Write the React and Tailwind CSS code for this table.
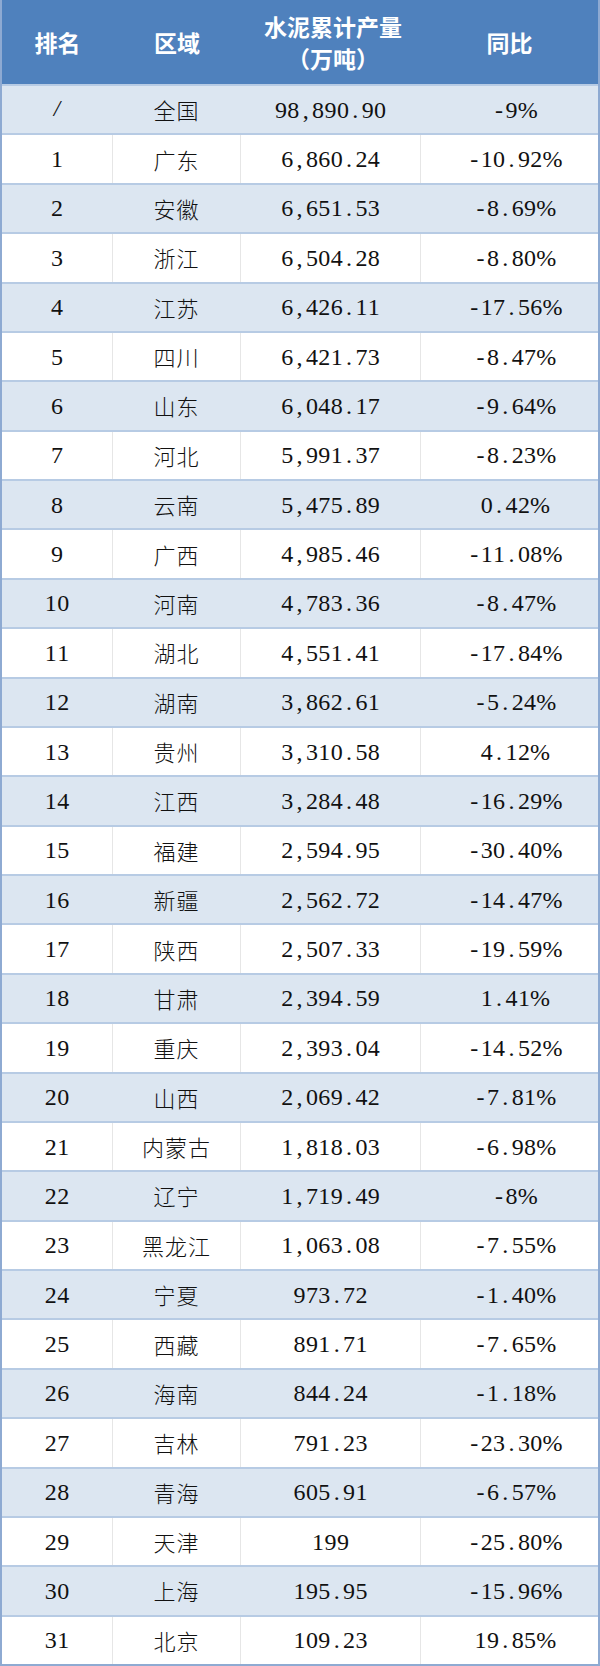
const rows = [
  ["/", "全国", "98,890.90", "-9%"],
  ["1", "广东", "6,860.24", "-10.92%"],
  ["2", "安徽", "6,651.53", "-8.69%"],
  ["3", "浙江", "6,504.28", "-8.80%"],
  ["4", "江苏", "6,426.11", "-17.56%"],
  ["5", "四川", "6,421.73", "-8.47%"],
  ["6", "山东", "6,048.17", "-9.64%"],
  ["7", "河北", "5,991.37", "-8.23%"],
  ["8", "云南", "5,475.89", "0.42%"],
  ["9", "广西", "4,985.46", "-11.08%"],
  ["10", "河南", "4,783.36", "-8.47%"],
  ["11", "湖北", "4,551.41", "-17.84%"],
  ["12", "湖南", "3,862.61", "-5.24%"],
  ["13", "贵州", "3,310.58", "4.12%"],
  ["14", "江西", "3,284.48", "-16.29%"],
  ["15", "福建", "2,594.95", "-30.40%"],
  ["16", "新疆", "2,562.72", "-14.47%"],
  ["17", "陕西", "2,507.33", "-19.59%"],
  ["18", "甘肃", "2,394.59", "1.41%"],
  ["19", "重庆", "2,393.04", "-14.52%"],
  ["20", "山西", "2,069.42", "-7.81%"],
  ["21", "内蒙古", "1,818.03", "-6.98%"],
  ["22", "辽宁", "1,719.49", "-8%"],
  ["23", "黑龙江", "1,063.08", "-7.55%"],
  ["24", "宁夏", "973.72", "-1.40%"],
  ["25", "西藏", "891.71", "-7.65%"],
  ["26", "海南", "844.24", "-1.18%"],
  ["27", "吉林", "791.23", "-23.30%"],
  ["28", "青海", "605.91", "-6.57%"],
  ["29", "天津", "199", "-25.80%"],
  ["30", "上海", "195.95", "-15.96%"],
  ["31", "北京", "109.23", "19.85%"],
];

// SimSun-like fixed cells for latin chars
const Mono = ({ text }) => (
  <span className="inline-flex font-['Liberation_Serif',serif] text-[24px]">
    {text.split("").map((c, i) => (
      <span key={i} className="inline-block w-[12.4px] text-center">
        {c}
      </span>
    ))}
  </span>
);

const Row = ({ r, i }) => {
  const blue = i % 2 === 0;
  const divider = blue ? "border-transparent" : "border-[#e6e6e6]";
  return (
    <div
      className={`grid flex-1 grid-cols-[111px_128px_180px_1fr] border-t-2 border-t-[#b7cbe4] ${
        blue ? "bg-[#dce6f1]" : "bg-white"
      }`}
    >
      <div className={`flex items-center justify-center border-r ${divider}`}>
        {r[0] === "/" ? (
          <span className="font-['Liberation_Serif',serif] italic">/</span>
        ) : (
          <Mono text={r[0]} />
        )}
      </div>
      <div
        className={`flex items-center justify-center border-r ${divider} font-['Noto_Sans_CJK_SC',sans-serif] text-[22px] font-light tracking-[1px]`}
      >
        {r[1]}
      </div>
      <div className={`flex items-center justify-center border-r ${divider}`}>
        <Mono text={r[2]} />
      </div>
      <div className="flex items-center justify-center pl-1">
        <Mono text={r[3]} />
      </div>
    </div>
  );
};

export default function App() {
  return (
    <div className="flex h-[1666px] w-[600px] flex-col border-x-2 border-b-2 border-[#8eaad2] font-['Liberation_Serif','Noto_Sans_CJK_SC',serif] text-[23px] text-[#111]">
      <div className="grid h-[84px] shrink-0 grid-cols-[111px_128px_180px_1fr] bg-[#4f81bd] font-['Noto_Sans_CJK_SC',sans-serif] text-[23px] font-bold leading-[32px] text-white">
        <div className="flex items-center justify-center">排名</div>
        <div className="flex items-center justify-center">区域</div>
        <div className="flex flex-col items-center justify-center pl-1">
          <span>水泥累计产量</span>
          <span>（万吨）</span>
        </div>
        <div className="flex items-center justify-center">同比</div>
      </div>
      {rows.map((r, i) => (
        <Row key={i} r={r} i={i} />
      ))}
    </div>
  );
}
